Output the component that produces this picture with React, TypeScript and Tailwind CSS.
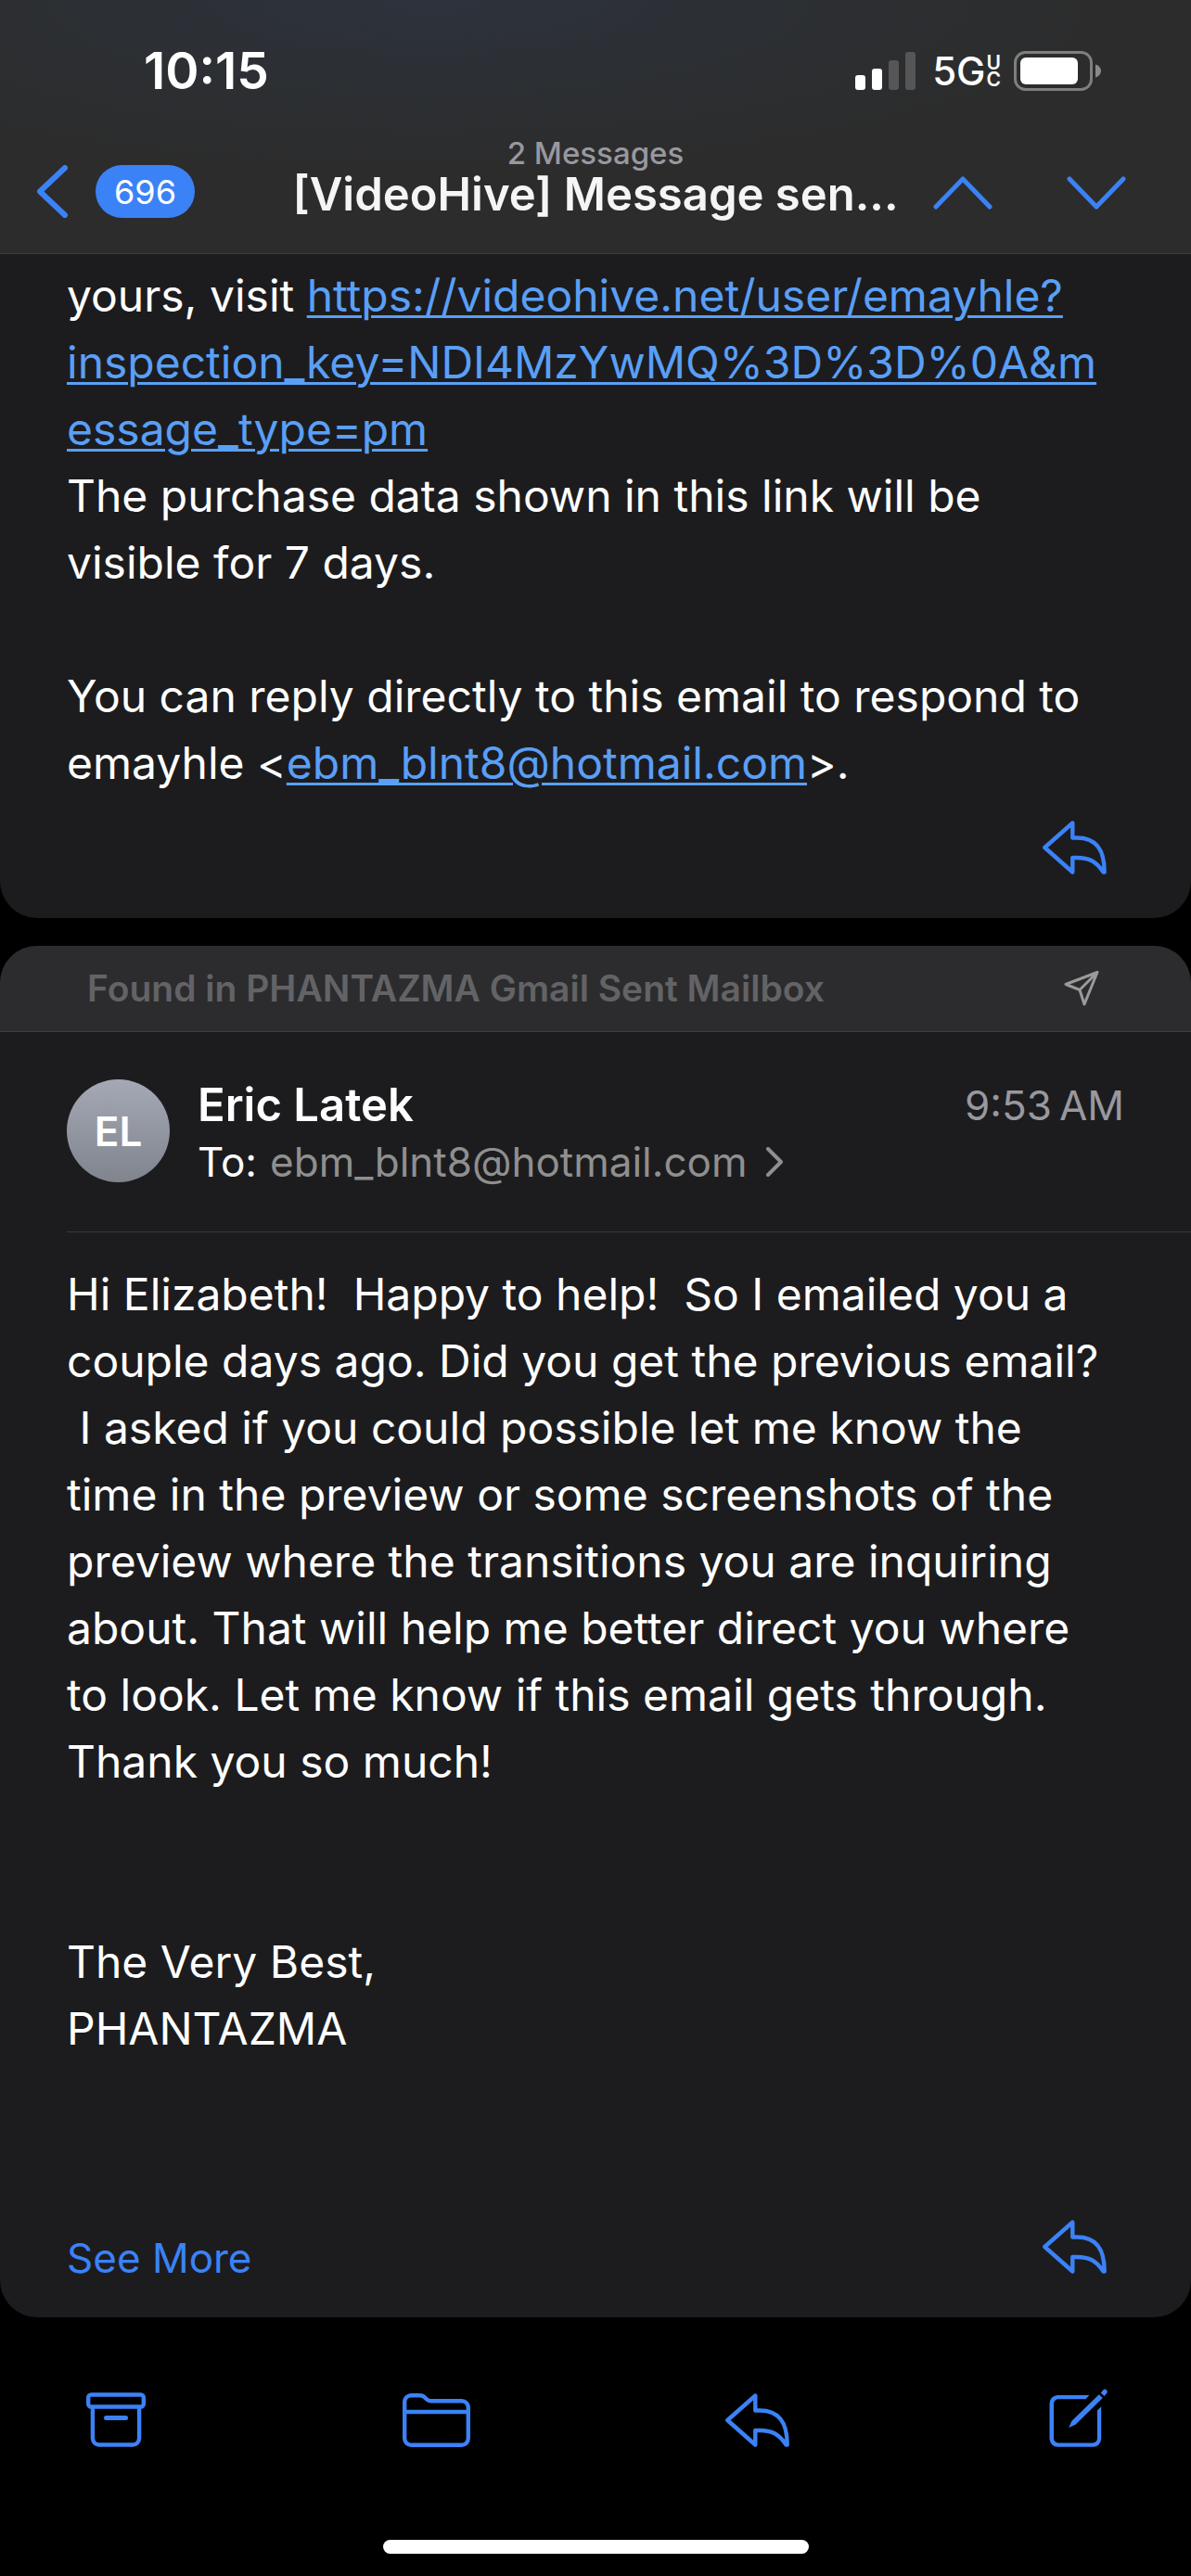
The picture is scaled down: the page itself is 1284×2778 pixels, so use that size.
import type { ReactNode } from "react";

function ReplyIcon() {
  return (
    <svg width="69" height="58" viewBox="0 0 69 58" fill="none" stroke="currentColor" strokeWidth="4.400" strokeLinejoin="round" aria-hidden="true">
      <path d="M32.3 2.5 2.3 29l30 26.5V40H37c13 0 20.500 3.500 28.500 15.500h1.200C66.700 33 59 18.500 37 18.500h-4.700z" />
    </svg>
  );
}

function SignalIcon() {
  return (
    <svg width="65" height="42" viewBox="0 0 65 42" fill="white" role="img" aria-label="Signal strength">
      <rect x="0" y="25" width="11" height="16" rx="3" />
      <rect x="18" y="18" width="11" height="23" rx="3" />
      <rect x="36" y="9" width="11" height="32" rx="3" fill="#565656" />
      <rect x="54" y="0" width="11" height="41" rx="3" fill="#565656" />
    </svg>
  );
}

function BatteryIcon() {
  return (
    <svg width="95" height="43" viewBox="0 0 95 43" role="img" aria-label="Battery">
      <rect x="1.500" y="1.500" width="82" height="40" rx="11" fill="none" stroke="#7f7f7f" strokeWidth="3" />
      <rect x="7" y="7" width="62" height="29" rx="6" fill="white" />
      <path d="M88 14.500c3.500 1 6 4 6 7s-2.500 6-6 7z" fill="#8a8a8a" />
    </svg>
  );
}

function Chevron({ d, w, h, width = 5 }: { d: string; w: number; h: number; width?: number }) {
  return (
    <svg width={w} height={h} viewBox={`0 0 ${w} ${h}`} fill="none" stroke="currentColor" strokeWidth={width} strokeLinecap="round" strokeLinejoin="round" aria-hidden="true">
      <path d={d} />
    </svg>
  );
}

function SendIcon() {
  return (
    <svg width="38" height="38" viewBox="0 0 38 38" fill="none" stroke="#9a9a9a" strokeWidth="3" strokeLinejoin="round" aria-hidden="true">
      <path d="M36 1.500 2 14.500 17 20.500 22 36z M17 20.500 36 1.500" />
    </svg>
  );
}

function ArchiveIcon() {
  return (
    <svg width="64" height="59" viewBox="0 0 64 59" fill="none" stroke="currentColor" strokeWidth="4.400" aria-hidden="true">
      <rect x="2.200" y="2.500" width="59.600" height="13" rx="3" />
      <path d="M6.900 16v33.500a7 7 0 0 0 7 7h36.200a7 7 0 0 0 7-7V16" />
      <path d="M21.500 27.500h21" strokeWidth="5" strokeLinecap="round" />
    </svg>
  );
}

function FolderIcon() {
  return (
    <svg width="73" height="58" viewBox="0 0 73 58" fill="none" stroke="currentColor" strokeWidth="4.400" aria-hidden="true">
      <path d="M2.200 9.200a7 7 0 0 1 7-7h9.500q2.800 0 4.800 1.800l2.500 2.400Q28 8.200 30.500 8.200h33.300a7 7 0 0 1 7 7v33.600a7 7 0 0 1-7 7H9.200a7 7 0 0 1-7-7zM2.200 20h68.600" />
    </svg>
  );
}

function ComposeIcon() {
  return (
    <svg width="63" height="63" viewBox="0 0 63 63" fill="currentColor" aria-hidden="true">
      <path d="M43.500 7 39.500 11.200H10a5 5 0 0 0-5 5v37.300a5 5 0 0 0 5 5h37a5 5 0 0 0 5-5V23.500l4.200-4.300V54a8.800 8.800 0 0 1-8.800 8.800H9.300A8.800 8.800 0 0 1 .5 54V15.800A8.800 8.800 0 0 1 9.300 7z" />
      <path d="M53.800 6.200 57.800 10 28.500 38.800 21.200 42 24.500 34.800z" />
      <path d="M55.700 4.400 58.300 1.500q1.800-1.800 3.600 0t0 3.700L59.500 8z" />
    </svg>
  );
}

function IconButton({ label, children }: { label: string; children: ReactNode }) {
  return (
    <button type="button" aria-label={label} className="text-[#3b82f7]">
      {children}
    </button>
  );
}

function ToolbarButton({ label, children }: { label: string; children: ReactNode }) {
  return (
    <button type="button" aria-label={label} className="flex w-[73px] justify-center text-[#3b82f7]">
      {children}
    </button>
  );
}

function MailLink({ href, children }: { href: string; children: ReactNode }) {
  return (
    <a href={href} className="wrap-anywhere text-[#5a9ff6] underline decoration-3 underline-offset-4">
      {children}
    </a>
  );
}

export default function App() {
  return (
    <div className="flex min-h-screen flex-col bg-black font-[Inter,sans-serif] text-white">
      <header className="border-b border-[#3d3d3f] bg-[#2c2c2c] bg-[radial-gradient(ellipse_60%_70%_at_36%_0%,#2d323c,#2c2f33_50%,transparent)]">
        <div className="flex h-[153px] items-center justify-between pr-24 pl-[155px]">
          <time className="text-[55px] leading-none font-semibold">10:15</time>
          <div className="flex items-center">
            <SignalIcon />
            <div className="ml-[18px] flex items-center gap-px">
              <span className="text-[42px] leading-none font-medium">5G</span>
              <span className="flex flex-col text-[21px] leading-[18px] font-semibold">
                <span>U</span>
                <span>C</span>
              </span>
            </div>
            <div className="ml-[14px]">
              <BatteryIcon />
            </div>
          </div>
        </div>
        <div className="grid h-[120px] grid-cols-[1fr_auto_1fr] px-10">
          <button type="button" aria-label="Back, 696 unread" className="mt-[25px] flex h-[57px] items-center gap-[30px] self-start text-[#3b82f7]">
            <Chevron w={33} h={57} d="M30 3 3 28.500 30 54" width={6} />
            <span className="flex h-[57px] items-center rounded-full bg-[#3b82f7] px-5 text-[36px] text-white">696</span>
          </button>
          <div className="flex flex-col items-center text-center">
            <p className="text-[33px] leading-6 font-medium text-[#98989f]">2 Messages</p>
            <h1 className="text-[49px] leading-[66px] font-semibold whitespace-nowrap text-[#f5f5f5]">[VideoHive] Message sen...</h1>
          </div>
          <div className="mt-[37px] flex h-9 justify-end gap-20 pr-[30px]">
            <IconButton label="Previous message">
              <Chevron w={64} h={36} d="M3 33 32 3 61 33" />
            </IconButton>
            <IconButton label="Next message">
              <Chevron w={64} h={36} d="M3 3 32 33 61 3" />
            </IconButton>
          </div>
        </div>
      </header>

      <main>
        <article className="rounded-b-[40px] bg-[#1c1c1e] pt-[9px] pb-[47px]">
          <div className="pr-20 pl-[72px] text-[48px] leading-[72px]">
            <p>
              yours, visit{" "}
              <MailLink href="https://videohive.net/user/emayhle?inspection_key=NDI4MzYwMQ%3D%3D%0A&message_type=pm">
                https://videohive.net/user/emayhle?
                <wbr />
                inspection_key=NDI4MzYwMQ%3D%3D%0A&amp;message_type=pm
              </MailLink>
            </p>
            <p>The purchase data shown in this link will be visible for 7 days.</p>
            <p className="mt-[72px]">
              You can reply directly to this email to respond to emayhle &lt;
              <MailLink href="mailto:ebm_blnt8@hotmail.com">ebm_blnt8@hotmail.com</MailLink>&gt;.
            </p>
          </div>
          <div className="mt-[26px] flex h-[58px] justify-end pr-[91px]">
            <IconButton label="Reply to emayhle">
              <ReplyIcon />
            </IconButton>
          </div>
        </article>

        <article className="mt-[30px] overflow-hidden rounded-[40px] bg-[#1c1c1e]">
          <div className="flex h-[93px] items-center justify-between border-b border-[#404042] bg-[#2c2c2e] pr-[99px] pl-[94px]">
            <p className="text-[39px] font-semibold text-[#636366]">Found in PHANTAZMA Gmail Sent Mailbox</p>
            <SendIcon />
          </div>
          <div className="ml-[72px] flex h-[216px] border-b border-[#3a3a3c] pt-[51px] pr-[72px]">
            <div className="flex size-[111px] items-center justify-center rounded-full bg-linear-to-b from-[#a5a9b6] to-[#80848d] text-[44px] font-semibold">EL</div>
            <div className="ml-[30px] grow">
              <div className="flex items-center justify-between">
                <h2 className="text-[49px] leading-[56px] font-semibold">Eric Latek</h2>
                <time className="text-[44px] leading-[56px] text-[#98989f]">9:53&#8201;AM</time>
              </div>
              <button type="button" className="flex items-center text-[44px] leading-[66px]">
                To:
                <span className="ml-[14px] text-[#8f8f8f]">ebm_blnt8@hotmail.com</span>
                <span className="ml-5 text-[#8f8f8f]">
                  <Chevron w={18} h={32} d="M2 2 16 16 2 30" width={4} />
                </span>
              </button>
            </div>
          </div>
          <div className="pt-[31px] pr-20 pl-[72px] text-[48px] leading-[72px]">
            <p>
              Hi Elizabeth!&nbsp; Happy to help!&nbsp; So I emailed you a couple days ago. Did you get the previous email? &nbsp;I asked if you could possible let me know the time in the preview or some screenshots of the preview where the transitions you are inquiring about. That will help me better direct you where to look. Let me know if this email gets through. Thank you so much!
            </p>
            <p className="mt-36">The Very Best,</p>
            <p>PHANTAZMA</p>
          </div>
          <div className="mt-[170px] flex h-[105px] items-start justify-between pr-[91px] pl-[72px]">
            <button type="button" className="mt-[14px] text-[44px] leading-[54px] text-[#3b82f7]">See More</button>
            <IconButton label="Reply to Eric Latek">
              <ReplyIcon />
            </IconButton>
          </div>
        </article>
      </main>

      <nav aria-label="Message actions" className="mt-[77px] flex h-[63px] items-end justify-between pr-[85px] pl-[88px]">
        <ToolbarButton label="Archive">
          <ArchiveIcon />
        </ToolbarButton>
        <ToolbarButton label="Move to folder">
          <FolderIcon />
        </ToolbarButton>
        <ToolbarButton label="Reply">
          <ReplyIcon />
        </ToolbarButton>
        <ToolbarButton label="Compose">
          <ComposeIcon />
        </ToolbarButton>
      </nav>
      <div className="mx-auto mt-auto mb-6 h-[15px] w-[459px] rounded-full bg-white" />
    </div>
  );
}
